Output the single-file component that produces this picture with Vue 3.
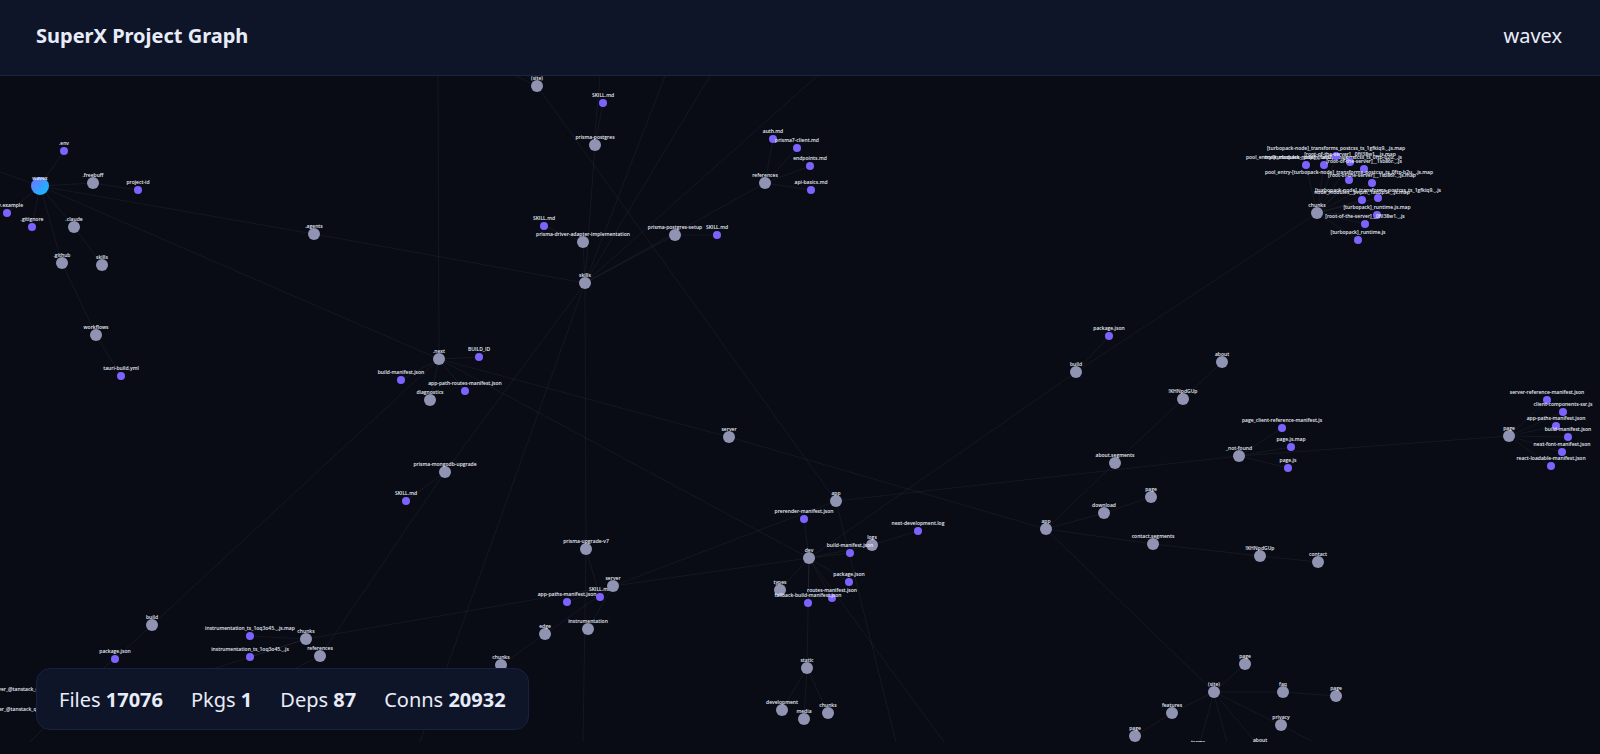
<script setup>
const stats = [
  { label: 'Files', value: 17076 },
  { label: 'Pkgs', value: 1 },
  { label: 'Deps', value: 87 },
  { label: 'Conns', value: 20932 },
]

const radius = { root: 9, dir: 6, file: 4 }

// [id, label, kind, x, y]
const nodes = [
  ['root', 'wavex', 'root', 40, 110],
  ['env', '.env', 'file', 64, 75],
  ['freebuff', '.freebuff', 'dir', 93, 107],
  ['pid', 'project-id', 'file', 138, 114],
  ['envex', '.env.example', 'file', 7, 137],
  ['gitignore', '.gitignore', 'file', 32, 151],
  ['claude', '.claude', 'dir', 74, 151],
  ['github', '.github', 'dir', 62, 187],
  ['cskills', 'skills', 'dir', 102, 189],
  ['workflows', 'workflows', 'dir', 96, 259],
  ['tauri', 'tauri-build.yml', 'file', 121, 300],
  ['agents', '.agents', 'dir', 314, 158],
  ['siteTop', '(site)', 'dir', 537, 10],
  ['sk1', 'SKILL.md', 'file', 603, 27],
  ['postgres', 'prisma-postgres', 'dir', 595, 69],
  ['sk2', 'SKILL.md', 'file', 544, 150],
  ['driver', 'prisma-driver-adapter-implementation', 'dir', 583, 166],
  ['skills', 'skills', 'dir', 585, 207],
  ['setup', 'prisma-postgres-setup', 'dir', 675, 159],
  ['sk3', 'SKILL.md', 'file', 717, 159],
  ['auth', 'auth.md', 'file', 773, 63],
  ['client', 'prisma7-client.md', 'file', 797, 72],
  ['endpoints', 'endpoints.md', 'file', 810, 90],
  ['refs', 'references', 'dir', 765, 107],
  ['basics', 'api-basics.md', 'file', 811, 114],
  ['next', '.next', 'dir', 439, 283],
  ['buildid', 'BUILD_ID', 'file', 479, 281],
  ['bm1', 'build-manifest.json', 'file', 401, 304],
  ['aprm', 'app-path-routes-manifest.json', 'file', 465, 315],
  ['diag', 'diagnostics', 'dir', 430, 324],
  ['server1', 'server', 'dir', 729, 361],
  ['mongo', 'prisma-mongodb-upgrade', 'dir', 445, 396],
  ['sk4', 'SKILL.md', 'file', 406, 425],
  ['build1', 'build', 'dir', 152, 549],
  ['pkg1', 'package.json', 'file', 115, 583],
  ['ins1', 'instrumentation_ts_1oq3o45._.js.map', 'file', 250, 560],
  ['chunks1', 'chunks', 'dir', 306, 563],
  ['refs2', 'references', 'dir', 320, 580],
  ['ins2', 'instrumentation_ts_1oq3o45._.js', 'file', 250, 581],
  ['chunks2', 'chunks', 'dir', 501, 589],
  ['tan1', 'server_@tanstack_query-core_build_modern', 'file', 44, 621],
  ['tan2', 'server_@tanstack_query-core_build_modern', 'file', 42, 641],
  ['upgrade', 'prisma-upgrade-v7', 'dir', 586, 473],
  ['sk5', 'SKILL.md', 'file', 600, 521],
  ['server2', 'server', 'dir', 613, 510],
  ['apm', 'app-paths-manifest.json', 'file', 567, 526],
  ['instr', 'instrumentation', 'dir', 588, 553],
  ['edge', 'edge', 'dir', 545, 558],
  ['app1', 'app', 'dir', 836, 425],
  ['prerender', 'prerender-manifest.json', 'file', 804, 443],
  ['devlog', 'next-development.log', 'file', 918, 455],
  ['logs', 'logs', 'dir', 872, 469],
  ['bm2', 'build-manifest.json', 'file', 850, 477],
  ['dev', 'dev', 'dir', 809, 482],
  ['pkg2', 'package.json', 'file', 849, 506],
  ['types', 'types', 'dir', 780, 514],
  ['routes', 'routes-manifest.json', 'file', 832, 522],
  ['fallback', 'fallback-build-manifest.json', 'file', 808, 527],
  ['static', 'static', 'dir', 807, 592],
  ['development', 'development', 'dir', 782, 634],
  ['media', 'media', 'dir', 804, 643],
  ['chunks3', 'chunks', 'dir', 828, 637],
  ['pkg3', 'package.json', 'file', 1109, 260],
  ['build2', 'build', 'dir', 1076, 296],
  ['about1', 'about', 'dir', 1222, 286],
  ['kh1', '!KHNpdGUp', 'dir', 1183, 323],
  ['aboutseg', 'about.segments', 'dir', 1115, 387],
  ['notfound', '_not-found', 'dir', 1239, 380],
  ['pcrm', 'page_client-reference-manifest.js', 'file', 1282, 352],
  ['pjsmap', 'page.js.map', 'file', 1291, 371],
  ['pjs', 'page.js', 'file', 1288, 392],
  ['app2', 'app', 'dir', 1046, 453],
  ['download', 'download', 'dir', 1104, 437],
  ['page1', 'page', 'dir', 1151, 421],
  ['contactseg', 'contact.segments', 'dir', 1153, 468],
  ['kh2', '!KHNpdGUp', 'dir', 1260, 480],
  ['contact', 'contact', 'dir', 1318, 486],
  ['page2', 'page', 'dir', 1509, 360],
  ['srm', 'server-reference-manifest.json', 'file', 1547, 324],
  ['ccs', 'client-components-ssr.js', 'file', 1563, 336],
  ['apm2', 'app-paths-manifest.json', 'file', 1556, 350],
  ['bm3', 'build-manifest.json', 'file', 1568, 361],
  ['nfm', 'next-font-manifest.json', 'file', 1562, 376],
  ['rlm', 'react-loadable-manifest.json', 'file', 1551, 390],
  ['page3', 'page', 'dir', 1245, 588],
  ['site', '(site)', 'dir', 1214, 616],
  ['faq', 'faq', 'dir', 1283, 616],
  ['page4', 'page', 'dir', 1336, 620],
  ['features', 'features', 'dir', 1172, 637],
  ['privacy', 'privacy', 'dir', 1281, 649],
  ['page5', 'page', 'dir', 1135, 660],
  ['about2', 'about', 'dir', 1260, 672],
  ['terms', 'terms', 'dir', 1198, 674],
  ['chunks4', 'chunks', 'dir', 1317, 137],
  ['c1', 'node_modules__pnpm_1ad2p3l._.js', 'file', 1306, 89],
  ['c2', 'pool_entry-[turbopack-node]_transforms_postcss_ts_0ftp-b2u._.js', 'file', 1324, 89],
  ['c3', '[turbopack-node]_transforms_postcss_ts_1gfkiq9._.js.map', 'file', 1336, 80],
  ['c4', '[root-of-the-server]__0fil38w1._.js.map', 'file', 1350, 86],
  ['c5', '[root-of-the-server]__1sb86r._.js', 'file', 1364, 93],
  ['c6', 'pool_entry-[turbopack-node]_transforms_postcss_ts_0ftp-b2u._.js.map', 'file', 1349, 104],
  ['c7', '[root-of-the-server]__1sb86r._.js.map', 'file', 1372, 107],
  ['c8', 'node_modules__pnpm_1ad2p3l._.js.map', 'file', 1362, 124],
  ['c9', '[turbopack-node]_transforms_postcss_ts_1gfkiq9._.js', 'file', 1378, 122],
  ['c10', '[turbopack]_runtime.js.map', 'file', 1377, 139],
  ['c11', '[root-of-the-server]__0fil38w1._.js', 'file', 1365, 148],
  ['c12', '[turbopack]_runtime.js', 'file', 1358, 164],
].map(([id, label, kind, x, y]) => ({ id, label, kind, x, y }))

const byId = Object.fromEntries(nodes.map((n) => [n.id, n]))

const links = [
  'root env', 'root freebuff', 'freebuff pid', 'root envex', 'root gitignore', 'root claude', 'root github',
  'claude cskills', 'github workflows', 'workflows tauri', 'root agents', 'agents skills', 'root next',
  'postgres sk1', 'postgres skills', 'driver sk2', 'driver skills', 'setup skills', 'setup sk3', 'skills refs',
  'refs auth', 'refs client', 'refs endpoints', 'refs basics', 'siteTop app1', 'next buildid', 'next bm1',
  'next aprm', 'next diag', 'next server1', 'next dev', 'next build1', 'server1 app2', 'skills mongo', 'mongo sk4',
  'skills upgrade', 'mongo refs2', 'build1 pkg1', 'chunks1 ins1', 'chunks1 ins2', 'chunks1 server2', 'upgrade sk5',
  'server2 apm', 'server2 instr', 'server2 edge', 'edge chunks2', 'server2 dev', 'server2 app1', 'dev prerender',
  'dev logs', 'logs devlog', 'dev bm2', 'dev pkg2', 'dev types', 'dev routes', 'dev fallback', 'dev static',
  'static development', 'static media', 'static chunks3', 'dev build2', 'build2 pkg3', 'build2 chunks4',
  'about1 kh1', 'kh1 aboutseg', 'aboutseg app2', 'app1 notfound', 'notfound page2', 'notfound pcrm',
  'notfound pjsmap', 'notfound pjs', 'app2 download', 'download page1', 'app2 contactseg', 'contactseg kh2',
  'kh2 contact', 'app2 site', 'page2 srm', 'page2 ccs', 'page2 apm2', 'page2 bm3', 'page2 nfm', 'page2 rlm',
  'site page3', 'site faq', 'faq page4', 'site features', 'site privacy', 'features page5', 'site about2',
  'site terms', 'chunks4 c1', 'chunks4 c2', 'chunks4 c3', 'chunks4 c4', 'chunks4 c5', 'chunks4 c6', 'chunks4 c7',
  'chunks4 c8', 'chunks4 c9', 'chunks4 c10', 'chunks4 c11', 'chunks4 c12',
].map((pair) => {
  const [a, b] = pair.split(' ').map((id) => byId[id])
  return [a.x, a.y, b.x, b.y]
})

// links whose other end is outside the visible part of the graph
const openLinks = [
  [438, 0, 439, 283],
  [600, 0, 594, 69],
  [665, 0, 585, 207],
  [710, 0, 585, 207],
  [817, 0, 585, 207],
  [516, 0, 537, 10],
  [0, 96, 40, 110],
  [585, 207, 420, 666],
  [586, 472, 583, 666],
  [836, 425, 896, 666],
  [809, 482, 944, 666],
  [1213, 615, 1227, 666],
  [1281, 649, 1313, 666],
  [306, 563, 160, 610],
  [114, 582, 30, 666],
  [320, 580, 240, 620],
]

const edges = [...links, ...openLinks]
</script>

<template>
  <div class="page">
    <header class="bar">
      <h1>SuperX Project Graph</h1>
      <span class="project">wavex</span>
    </header>
    <main class="stage">
      <svg class="graph" role="img" aria-label="Project graph">
        <defs>
          <linearGradient id="root-fill" x1="0" y1="0" x2="1" y2="1">
            <stop offset="0" stop-color="#7c6cff" />
            <stop offset="1" stop-color="#00c8ff" />
          </linearGradient>
        </defs>
        <g class="edges">
          <line v-for="(e, i) in edges" :key="i" :x1="e[0]" :y1="e[1]" :x2="e[2]" :y2="e[3]" />
        </g>
        <g v-for="n in nodes" :key="n.id" :class="n.kind">
          <circle :cx="n.x" :cy="n.y" :r="radius[n.kind]" />
          <text :x="n.x" :y="n.y - 6">{{ n.label }}</text>
        </g>
      </svg>
      <div class="stats">
        <span v-for="s in stats" :key="s.label">{{ s.label }} <b>{{ s.value }}</b></span>
      </div>
    </main>
  </div>
</template>

<style>
body {
  background: #090c15;
}
</style>

<style scoped>
.page {
  box-sizing: border-box;
  display: flex;
  flex-direction: column;
  height: 100vh;
  padding-bottom: 12px;
  background: #090c15;
  color: #e8ecf8;
  font-family: "Noto Sans", "Open Sans", sans-serif;
  font-size: 20px;
  line-height: 28px;
}

.bar {
  display: flex;
  align-items: center;
  justify-content: space-between;
  padding: 22px 38px 25px 36px;
  background: #0f1528;
  border-bottom: 1px solid #1b2445;
}

h1 {
  margin: 0;
  font-size: 20px;
  font-weight: 700;
}

.stage {
  position: relative;
  flex: 1;
  min-height: 0;
}

.graph {
  display: block;
  width: 100%;
  height: 100%;
  overflow: hidden;
}

.edges line {
  stroke: #fff;
  stroke-opacity: 0.05;
}

.graph text {
  fill: #e8ecf8;
  font-family: "Open Sans", "Noto Sans", sans-serif;
  font-size: 5px;
  font-weight: 600;
  text-anchor: middle;
}

.root circle {
  fill: url(#root-fill);
}

.dir circle {
  fill: #9094b2;
}

.file circle {
  fill: #7c63ff;
}

.stats {
  position: absolute;
  left: 36px;
  bottom: 12px;
  display: flex;
  gap: 28px;
  padding: 17px 22px 15px;
  background: #0f1528;
  border: 1px solid #1a2140;
  border-radius: 14px;
}
</style>
